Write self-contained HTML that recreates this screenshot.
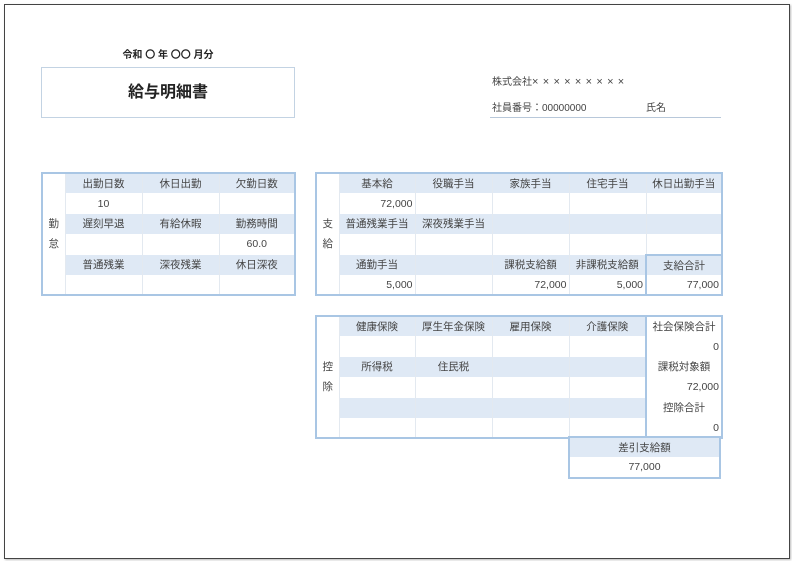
<!DOCTYPE html>
<html><head><meta charset="utf-8"><style>
*{margin:0;padding:0;box-sizing:border-box}
body{width:792px;height:561px;background:#fff;position:relative;overflow:hidden;font-family:"Liberation Sans","Noto Sans CJK JP",sans-serif;color:#333}
.frame{position:absolute;left:4px;top:4px;width:786px;height:555px;border:1px solid #444;box-shadow:1px 1px 2px #bbb}
.a{position:absolute}
table{position:absolute;border-collapse:collapse;table-layout:fixed;border:2px solid #a9c6e4;font-size:10.5px}
td{height:20.4px;border-left:1px solid #e3e9f0;text-align:center;padding:0 2px;white-space:nowrap;overflow:hidden;color:#444}
tr.b td.c{background:#dfe9f5}
td.l{width:23px;background:#fff;border-left:none;line-height:20px}
td.r{text-align:right}
</style></head><body>
<div class="frame"></div>
<div class="a" style="left:41px;top:46px;width:254px;text-align:center;font-size:10px;font-weight:bold;color:#222">令和 〇 年 〇〇 月分</div>
<div class="a" style="left:41px;top:67px;width:254px;height:51px;border:1px solid #c3d3e3;text-align:center;line-height:49px;font-size:16px;font-weight:bold;color:#222">給与明細書</div>
<div class="a" style="left:492px;top:73px;font-size:10px;color:#444">株式会社<span style="letter-spacing:4.3px;font-size:11px">×××××××××</span></div>
<div class="a" style="left:492px;top:99px;font-size:10px;color:#444">社員番号：00000000</div>
<div class="a" style="left:646px;top:99px;font-size:10px;color:#444">氏名</div>
<div class="a" style="left:490px;top:117px;width:231px;height:1px;background:#b8c8da"></div>

<table style="left:41px;top:172px;width:253px">
<colgroup><col style="width:23px"><col style="width:77px"><col style="width:77px"><col style="width:76px"></colgroup>
<tr class="b"><td class="l" rowspan="6">勤<br>怠</td><td class="c">出勤日数</td><td class="c">休日出勤</td><td class="c">欠勤日数</td></tr>
<tr><td>10</td><td></td><td></td></tr>
<tr class="b"><td class="c">遅刻早退</td><td class="c">有給休暇</td><td class="c">勤務時間</td></tr>
<tr><td></td><td></td><td>60.0</td></tr>
<tr class="b"><td class="c">普通残業</td><td class="c">深夜残業</td><td class="c">休日深夜</td></tr>
<tr><td></td><td></td><td></td></tr>
</table>

<table style="left:315px;top:172px;width:406px">
<colgroup><col style="width:23px"><col style="width:76px"><col style="width:77px"><col style="width:77px"><col style="width:77px"><col style="width:76px"></colgroup>
<tr class="b"><td class="l" rowspan="6">支<br>給</td><td class="c">基本給</td><td class="c">役職手当</td><td class="c">家族手当</td><td class="c">住宅手当</td><td class="c">休日出勤手当</td></tr>
<tr><td class="r">72,000</td><td></td><td></td><td></td><td></td></tr>
<tr class="b"><td class="c">普通残業手当</td><td class="c">深夜残業手当</td><td class="c"></td><td class="c"></td><td class="c"></td></tr>
<tr><td></td><td></td><td></td><td></td><td></td></tr>
<tr class="b"><td class="c">通勤手当</td><td class="c"></td><td class="c">課税支給額</td><td class="c">非課税支給額</td><td class="c" style="border:2px solid #a9c6e4;border-bottom:none">支給合計</td></tr>
<tr><td class="r">5,000</td><td></td><td class="r">72,000</td><td class="r">5,000</td><td class="r" style="border-left:2px solid #a9c6e4">77,000</td></tr>
</table>

<table style="left:315px;top:315px;width:406px">
<colgroup><col style="width:23px"><col style="width:76px"><col style="width:77px"><col style="width:77px"><col style="width:77px"><col style="width:76px"></colgroup>
<tr class="b"><td class="l" rowspan="6">控<br>除</td><td class="c">健康保険</td><td class="c">厚生年金保険</td><td class="c">雇用保険</td><td class="c">介護保険</td><td style="border-left:2px solid #a9c6e4">社会保険合計</td></tr>
<tr><td></td><td></td><td></td><td></td><td class="r" style="border-left:2px solid #a9c6e4">0</td></tr>
<tr class="b"><td class="c">所得税</td><td class="c">住民税</td><td class="c"></td><td class="c"></td><td style="border-left:2px solid #a9c6e4">課税対象額</td></tr>
<tr><td></td><td></td><td></td><td></td><td class="r" style="border-left:2px solid #a9c6e4">72,000</td></tr>
<tr class="b"><td class="c"></td><td class="c"></td><td class="c"></td><td class="c"></td><td style="border-left:2px solid #a9c6e4">控除合計</td></tr>
<tr><td></td><td></td><td></td><td></td><td class="r" style="border-left:2px solid #a9c6e4">0</td></tr>
</table>

<table style="left:568px;top:436px;width:153px">
<tr class="b"><td class="c" style="border-left:none">差引支給額</td></tr>
<tr><td style="border-left:none">77,000</td></tr>
</table>
</body></html>
